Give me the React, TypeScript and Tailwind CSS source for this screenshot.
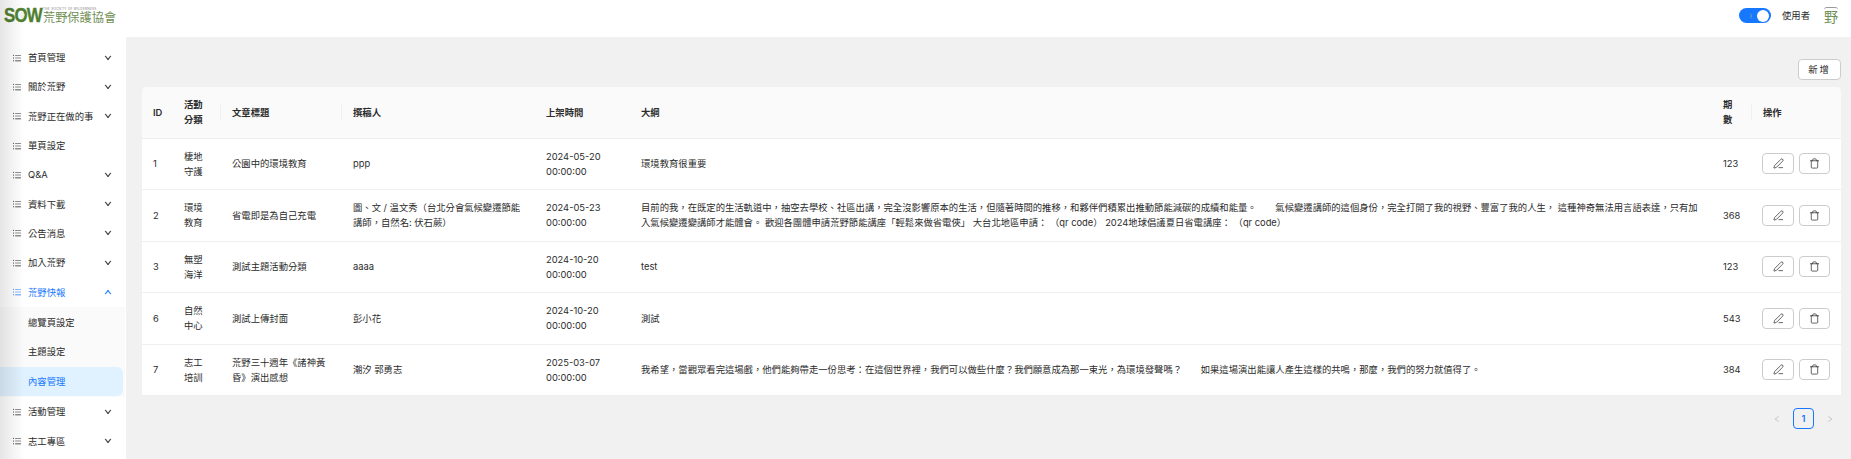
import { AiOutlineUnorderedList, AiOutlineDown, AiOutlineUp, AiOutlineLeft, AiOutlineRight } from "react-icons/ai";
import { PenLine, Trash } from "lucide-react";

const MENU_TOP = [
  { label: "首頁管理", arrow: true },
  { label: "關於荒野", arrow: true },
  { label: "荒野正在做的事", arrow: true },
  { label: "單頁設定", arrow: false },
  { label: "Q&A", arrow: true },
  { label: "資料下載", arrow: true },
  { label: "公告消息", arrow: true },
  { label: "加入荒野", arrow: true },
];

const SUB_MENU = ["總覽頁設定", "主題設定", "內容管理"];

const MENU_BOTTOM = ["活動管理", "志工專區"];

const ROWS = [
  {
    id: 1,
    category: ["棲地", "守護"],
    title: "公園中的環境教育",
    author: "ppp",
    date: "2024-05-20",
    outline: "環境教育很重要",
    issue: 123,
  },
  {
    id: 2,
    category: ["環境", "教育"],
    title: "省電即是為自己充電",
    author: "圖、文 / 温文秀（台北分會氣候變遷節能講師，自然名: 伏石蕨）",
    date: "2024-05-23",
    outline:
      "目前的我，在既定的生活軌道中，抽空去學校、社區出講，完全沒影響原本的生活，但隨著時間的推移，和夥伴們積累出推動節能減碳的成績和能量。　　氣候變遷講師的這個身份，完全打開了我的視野、豐富了我的人生， 這種神奇無法用言語表達，只有加入氣候變遷變講師才能體會。 歡迎各團體申請荒野節能講座「輕鬆來做省電俠」 大台北地區申請： （qr code） 2024地球倡議夏日省電講座： （qr code）",
    issue: 368,
  },
  {
    id: 3,
    category: ["無塑", "海洋"],
    title: "測試主題活動分類",
    author: "aaaa",
    date: "2024-10-20",
    outline: "test",
    issue: 123,
  },
  {
    id: 6,
    category: ["自然", "中心"],
    title: "測試上傳封面",
    author: "彭小花",
    date: "2024-10-20",
    outline: "測試",
    issue: 543,
  },
  {
    id: 7,
    category: ["志工", "培訓"],
    title: "荒野三十週年《諸神黃昏》演出感想",
    author: "潮汐 郭勇志",
    date: "2025-03-07",
    outline:
      "我希望，當觀眾看完這場戲，他們能夠帶走一份思考：在這個世界裡，我們可以做些什麼？我們願意成為那一束光，為環境發聲嗎？　　如果這場演出能讓人產生這樣的共鳴，那麼，我們的努力就值得了。",
    issue: 384,
  },
];

function MenuRow({ label, arrow }: { label: string; arrow: boolean }) {
  return (
    <div className="flex h-[29.3px] items-center pl-3 pr-[14px]">
      <AiOutlineUnorderedList className="h-[10px] w-[10px] shrink-0 text-[#222]" />
      <span className="ml-[6px] flex-1">{label}</span>
      {arrow && <AiOutlineDown className="h-2 w-2 stroke-[60] text-[#333]" />}
    </div>
  );
}

function Th({ children, divider }: { children: React.ReactNode; divider?: boolean }) {
  return (
    <th className="relative px-[11px] text-left font-semibold">
      {children}
      {divider && <span className="absolute right-0 top-1/2 h-[15px] w-px -translate-y-1/2 bg-[#efefef]" />}
    </th>
  );
}

export default function App() {
  return (
    <div className="relative flex h-screen w-full flex-col overflow-hidden bg-white font-['Inter','Noto_Sans_CJK_TC',sans-serif] text-[9.33px] leading-[15px] text-[#2b2b2b]">
      {/* left edge shade */}
      <div className="pointer-events-none absolute inset-y-0 left-0 z-10 w-[24px] bg-gradient-to-r from-black/10 to-transparent" />

      <header className="flex h-[37px] shrink-0 items-center justify-between pl-1 pr-[11px]">
        <div className="flex items-center pb-[7px]">
          <span className="relative w-[38px] origin-left scale-x-[0.8] font-['Liberation_Sans',sans-serif] text-[21px] font-bold leading-[18px] tracking-[-1px] text-[#4f7f31] [-webkit-text-stroke:0.4px_#4f7f31]">
            SOW
            {/* leaf mark inside the O */}
            <svg viewBox="0 0 10 10" className="absolute left-[17.5px] top-[5px] h-[8px] w-[9px]" fill="none" stroke="#dfe8d6" strokeWidth="0.9">
              <path d="M5 1.5C3 3 3 6 5 8.5C7 6 7 3 5 1.5Z" />
              <path d="M1 4C1.5 6.5 3 7.5 5 8.5C7 7.5 8.5 6.5 9 4" />
            </svg>
          </span>
          <div className="ml-[1px] flex flex-col">
            <span className="whitespace-nowrap text-[3px] leading-[4px] tracking-[0.35px] text-[#777]">THE SOCIETY OF WILDERNESS</span>
            <span className="text-[12.2px] leading-[13px] text-[#6f8f55]">荒野保護協會</span>
          </div>
        </div>
        <div className="flex items-center pb-[6px]">
          <div className="flex h-[15px] w-[32px] items-center justify-between rounded-full bg-[#1677ff] pl-[9px] pr-[2px]">
            <svg viewBox="0 0 10 10" className="h-[8px] w-[6px]" fill="#fadb14">
              <path d="M3 0.5A5 5 0 0 1 3 9.5A6.5 6.5 0 0 0 3 0.5Z" />
            </svg>
            <span className="h-[12px] w-[12px] rounded-full bg-white" />
          </div>
          <span className="ml-[11px]">使用者</span>
          <div className="ml-[12px] flex w-[18px] flex-col items-center">
            <span className="h-[3px] w-[14px] rounded-t-full border-t border-[#999]" />
            <span className="text-[14px] leading-[14px] text-[#6f8f55]">野</span>
          </div>
        </div>
      </header>

      <div className="flex min-h-0 flex-1">
        <aside className="w-[126px] shrink-0 overflow-hidden bg-white pt-[6px]">
          {MENU_TOP.map((item) => (
            <MenuRow key={item.label} label={item.label} arrow={item.arrow} />
          ))}
          <div className="flex h-[29.3px] items-center pl-3 pr-[14px] text-[#1677ff]">
            <AiOutlineUnorderedList className="h-[10px] w-[10px] shrink-0" />
            <span className="ml-[6px] flex-1">荒野快報</span>
            <AiOutlineUp className="h-2 w-2 stroke-[60]" />
          </div>
          <div className="mr-[1px] bg-[#fafafa] py-[1px]">
            {SUB_MENU.map((s, i) => (
              <div
                key={s}
                className={`mr-[2px] flex h-[29.5px] items-center rounded-r-[6px] pl-[28px] ${
                  i === 2 ? "bg-[#e0f1ff] text-[#1677ff]" : ""
                }`}
              >
                {s}
              </div>
            ))}
          </div>
          {MENU_BOTTOM.map((m) => (
            <MenuRow key={m} label={m} arrow />
          ))}
        </aside>

        <main className="min-w-0 flex-1 bg-[#f1f1f1] pl-4 pr-[10px] pt-[22px]">
          <div className="flex justify-end">
            <button className="h-[21px] w-[43px] rounded-[4px] border border-[#ccc] bg-white tracking-[2px]">新增</button>
          </div>
          <div className="mt-[7px] overflow-hidden rounded-t-[5px]">
            <table className="w-full table-fixed border-collapse bg-white">
              <colgroup>
                <col className="w-[31px]" />
                <col className="w-[48px]" />
                <col className="w-[121px]" />
                <col className="w-[193px]" />
                <col className="w-[95px]" />
                <col />
                <col className="w-[40px]" />
                <col className="w-[89px]" />
              </colgroup>
              <thead>
                <tr className="h-[51px] border-b border-[#efefef] bg-[#fafafa]">
                  <Th>ID</Th>
                  <Th divider>活動分類</Th>
                  <Th divider>文章標題</Th>
                  <Th>撰稿人</Th>
                  <Th>上架時間</Th>
                  <Th>大綱</Th>
                  <Th divider>期數</Th>
                  <Th>操作</Th>
                </tr>
              </thead>
              <tbody>
                {ROWS.map((r) => (
                  <tr key={r.id} className="h-[51.5px] border-b border-[#efefef]">
                    <td className="px-[11px]">{r.id}</td>
                    <td className="px-[11px]">
                      {r.category[0]}
                      <br />
                      {r.category[1]}
                    </td>
                    <td className="px-[11px]">{r.title}</td>
                    <td className="px-[11px]">{r.author}</td>
                    <td className="px-[11px]">
                      {r.date}
                      <br />
                      00:00:00
                    </td>
                    <td className="px-[11px]">{r.outline}</td>
                    <td className="px-[11px]">{r.issue}</td>
                    <td className="pl-[10px]">
                      <div className="flex gap-[5px]">
                        <button className="flex h-[21px] w-[32px] items-center justify-center rounded-[4px] border border-[#ccc] bg-white">
                          <PenLine size={11} strokeWidth={1.5} className="text-[#222]" />
                        </button>
                        <button className="flex h-[21px] w-[31px] items-center justify-center rounded-[4px] border border-[#ccc] bg-white">
                          <Trash size={11} strokeWidth={1.5} className="text-[#222]" />
                        </button>
                      </div>
                    </td>
                  </tr>
                ))}
              </tbody>
            </table>
          </div>
          <div className="mt-3 flex items-center justify-end pr-[7px]">
            <AiOutlineLeft className="h-2 w-2 text-[#bbb]" />
            <span className="mx-[12px] flex h-[21px] w-[21px] items-center justify-center rounded-[4px] border border-[#1677ff] font-semibold text-[#1677ff]">1</span>
            <AiOutlineRight className="h-2 w-2 text-[#bbb]" />
          </div>
        </main>
      </div>
    </div>
  );
}
